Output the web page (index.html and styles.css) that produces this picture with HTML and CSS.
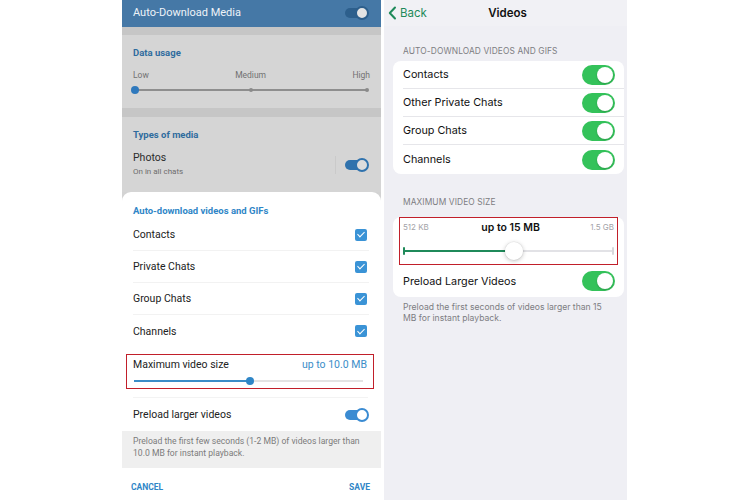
FILE: index.html
```html
<!DOCTYPE html>
<html>
<head>
<meta charset="utf-8">
<link rel="stylesheet" href="styles.css">
</head>
<body>
<div class="stage">
  <div class="android">
    <div class="a-header">
      <span>Auto-Download Media</span>
      <span class="a-toggle dim-white"><span class="knob"></span></span>
    </div>
    <div class="a-strip"></div>
    <div class="a-section usage">
      <div class="a-title">Data usage</div>
      <div class="usage-labels"><span>Low</span><span>Medium</span><span>High</span></div>
      <div class="usage-track">
        <span class="u-dot big"></span>
        <span class="u-dot mid"></span>
        <span class="u-dot end"></span>
      </div>
    </div>
    <div class="a-strip tall"></div>
    <div class="a-section types">
      <div class="a-title">Types of media</div>
      <div class="photo-row">
        <div>
          <div class="photo-name">Photos</div>
          <div class="photo-sub">On in all chats</div>
        </div>
        <span class="divider-v"></span>
        <span class="a-toggle dimmed"><span class="knob"></span></span>
      </div>
    </div>
    <div class="sheet">
      <div class="sheet-title">Auto-download videos and GIFs</div>
      <div class="chk-row"><span>Contacts</span><span class="chk"></span></div>
      <div class="chk-row"><span>Private Chats</span><span class="chk"></span></div>
      <div class="chk-row"><span>Group Chats</span><span class="chk"></span></div>
      <div class="chk-row last"><span>Channels</span><span class="chk"></span></div>
      <div class="maxbox">
        <div class="max-line"><span>Maximum video size</span><span class="max-val">up to 10.0 MB</span></div>
        <div class="max-track"><span class="max-fill"></span><span class="max-thumb"></span></div>
      </div>
      <div class="preload-row"><span>Preload larger videos</span><span class="a-toggle"><span class="knob"></span></span></div>
      <div class="a-info">Preload the first few seconds (1-2 MB) of videos larger than 10.0 MB for instant playback.</div>
      <div class="a-buttons"><span>CANCEL</span><span>SAVE</span></div>
    </div>
  </div>

  <div class="ios">
    <div class="nav">
      <span class="back">
        <svg width="9" height="14" viewBox="0 0 9 14"><path d="M7 1.5 L1.8 7 L7 12.5" fill="none" stroke="#1f8a5a" stroke-width="2" stroke-linecap="round" stroke-linejoin="round"/></svg>
        Back
      </span>
      <span class="nav-title">Videos</span>
    </div>
    <div class="i-label first">AUTO-DOWNLOAD VIDEOS AND GIFS</div>
    <div class="i-group">
      <div class="i-row"><span>Contacts</span><span class="i-toggle"></span></div>
      <div class="i-row"><span>Other Private Chats</span><span class="i-toggle"></span></div>
      <div class="i-row"><span>Group Chats</span><span class="i-toggle"></span></div>
      <div class="i-row last"><span>Channels</span><span class="i-toggle"></span></div>
    </div>
    <div class="i-label">MAXIMUM VIDEO SIZE</div>
    <div class="i-group">
      <div class="i-redbox">
        <div class="i-size-labels"><span class="sm">512 KB</span><span class="big">up to 15 MB</span><span class="sm">1.5 GB</span></div>
        <div class="i-track"><span class="i-fill"></span><span class="i-thumb"></span></div>
      </div>
      <div class="i-row last"><span>Preload Larger Videos</span><span class="i-toggle"></span></div>
    </div>
    <div class="i-foot">Preload the first seconds of videos larger than 15 MB for instant playback.</div>
  </div>
</div>
</body>
</html>
```

FILE: styles.css
```css
* { box-sizing: border-box; }
html, body { margin: 0; padding: 0; background: #ffffff; }
body { width: 750px; height: 500px; overflow: hidden; }

.stage {
  display: flex;
  gap: 3px;
  padding-left: 122px;
  height: 500px;
}

/* ---------- Android ---------- */
.android {
  width: 259px;
  height: 500px;
  background: #d3d3d3;
  font-family: Roboto, "Noto Sans", sans-serif;
  display: flex;
  flex-direction: column;
  overflow: hidden;
}
.a-header {
  height: 27px;
  background: #4578a6;
  color: #eef3f8;
  font-size: 11px;
  display: flex;
  align-items: center;
  justify-content: space-between;
  padding: 0 13px 2px 11px;
}
.a-strip { height: 8px; background: #c6c6c6; }
.a-strip.tall { height: 9px; }
.a-section { background: #d5d5d5; padding: 0 11px; }
.usage { height: 73px; padding-top: 12px; }
.a-title {
  color: #2f6c9e;
  font-weight: 700;
  font-size: 9.5px;
  line-height: 12px;
}
.usage-labels {
  display: flex;
  justify-content: space-between;
  color: #727272;
  font-size: 8.5px;
  margin-top: 11px;
  line-height: 10px;
}
.usage-track {
  position: relative;
  height: 2px;
  margin: 9px 3px 0 2px;
  background: #8e8e8e;
}
.u-dot {
  position: absolute;
  top: 50%;
  width: 4px; height: 4px;
  margin: -2px 0 0 -2px;
  border-radius: 50%;
  background: #8a8a8a;
}
.u-dot.big { left: 0; width: 8px; height: 8px; margin: -4px 0 0 -4px; background: #2f79bd; }
.u-dot.mid { left: 50%; }
.u-dot.end { left: 100%; }

.types { height: 75px; padding-top: 12px; }
.photo-row {
  display: flex;
  align-items: center;
  margin-top: 10px;
}
.photo-name { color: #2c2c2c; font-size: 10.5px; line-height: 13px; }
.photo-sub { color: #6d6d6d; font-size: 8px; line-height: 12px; margin-top: 2px; }
.divider-v { margin-left: auto; width: 1px; height: 18px; background: #cacaca; margin-right: 9px; }

.a-toggle {
  position: relative;
  width: 23px;
  height: 10px;
  border-radius: 5px;
  background: #3a8bd2;
  display: inline-block;
}
.a-toggle .knob {
  position: absolute;
  right: -1px; top: -2px;
  width: 14px; height: 14px;
  border-radius: 50%;
  background: #fff;
  border: 2px solid #3a8bd2;
}
.a-toggle.dimmed { background: #2f72ad; margin-right: 2px; }
.a-toggle.dimmed .knob { background: #dcdcdc; border-color: #2f72ad; }
.a-toggle.dim-white { background: #2d5f8c; }
.a-toggle.dim-white .knob { background: #e4e4e4; border-color: #2d5f8c; }

.sheet {
  background: #ffffff;
  border-radius: 9px 9px 0 0;
  flex: 1;
  display: flex;
  flex-direction: column;
}
.sheet-title {
  color: #2f86c7;
  font-weight: 700;
  font-size: 9.5px;
  line-height: 14px;
  padding: 12px 11px 1px;
}
.chk-row {
  height: 32px;
  margin: 0 12px 0 11px;
  display: flex;
  align-items: center;
  justify-content: space-between;
  font-size: 10.5px;
  color: #222;
  border-bottom: 1px solid #f2f2f2;
}
.chk-row.last { border-bottom: none; }
.chk {
  width: 12px; height: 12px;
  border-radius: 2px;
  background: #3a93d6;
  position: relative;
  margin-right: 2px;
}
.chk::after {
  content: "";
  position: absolute;
  left: 3.5px; top: 1.5px;
  width: 3px; height: 6px;
  border: solid #fff;
  border-width: 0 1.6px 1.6px 0;
  transform: rotate(45deg);
}
.maxbox {
  margin: 7px 7px 0 4px;
  height: 35px;
  border: 1.5px solid #c11f2a;
  padding: 3px 6px 0 6px;
}
.max-line {
  display: flex;
  justify-content: space-between;
  font-size: 10.5px;
  line-height: 13px;
  color: #222;
}
.max-val { color: #3a8dc8; }
.max-track {
  position: relative;
  height: 2px;
  margin: 9px 4px 0 1px;
  background: #e3e3e3;
}
.max-fill { position: absolute; left: 0; top: 0; height: 2px; width: 50.5%; background: #3a8dc8; }
.max-thumb {
  position: absolute;
  left: 50.5%; top: 50%;
  width: 8px; height: 8px;
  margin: -4px 0 0 -4px;
  border-radius: 50%;
  background: #2f86c7;
}
.preload-row {
  margin: 8px 13px 0 11px;
  border-top: 1px solid #f3f3f3;
  height: 34px;
  display: flex;
  align-items: center;
  justify-content: space-between;
  font-size: 10.5px;
  color: #222;
}
.a-info {
  background: #efefef;
  color: #7b7b7b;
  font-size: 8.6px;
  line-height: 12px;
  height: 37px;
  padding: 4px 14px 0 11px;
}
.a-buttons {
  flex: 1;
  display: flex;
  justify-content: space-between;
  align-items: center;
  padding: 5px 11px 0 9px;
  color: #2f86c7;
  font-weight: 700;
  font-size: 8.5px;
}

/* ---------- iOS ---------- */
.ios {
  width: 243px;
  height: 500px;
  background: #efeff4;
  font-family: Inter, "Liberation Sans", sans-serif;
  color: #111;
}
.nav {
  height: 26px;
  position: relative;
  display: flex;
  align-items: center;
  padding-left: 4px;
  background: #f1f1f5;
}
.back {
  display: flex;
  align-items: center;
  gap: 3px;
  color: #1f8a5a;
  font-size: 11.5px;
}
.nav-title {
  position: absolute;
  left: 0; right: 0;
  text-align: center;
  font-weight: 600;
  font-size: 11.5px;
  pointer-events: none;
  padding-left: 4px;
}
.i-label {
  color: #7d7d82;
  font-size: 8.4px;
  letter-spacing: 0.1px;
  line-height: 10px;
  padding: 23px 0 5px 19px;
}
.i-label.first { padding-top: 20px; }
.i-group {
  background: #ffffff;
  border-radius: 8px;
  margin: 0 3px 0 9px;
}
.i-row {
  height: 28px;
  margin-left: 10px;
  padding-right: 9px;
  display: flex;
  align-items: center;
  justify-content: space-between;
  font-size: 10.8px;
  color: #111;
  border-bottom: 1px solid #e6e6ea;
}
.i-row.last { border-bottom: none; height: 29px; }
.i-redbox + .i-row.last { height: 32px; }
.i-toggle {
  position: relative;
  width: 33px;
  height: 20px;
  border-radius: 10px;
  background: #34c25a;
}
.i-toggle::after {
  content: "";
  position: absolute;
  right: 2px; top: 2px;
  width: 16px; height: 16px;
  border-radius: 50%;
  background: #fff;
  box-shadow: 0 1px 2px rgba(0,0,0,0.2);
}
.i-redbox {
  margin: 5px 6px 0 6px;
  height: 48px;
  border: 1.5px solid #c11f2a;
  padding: 3px 3px 0 3px;
}
.i-size-labels {
  display: flex;
  justify-content: space-between;
  align-items: center;
  line-height: 13px;
}
.i-size-labels .sm { color: #a3a3a8; font-size: 8px; }
.i-size-labels .big { font-weight: 600; font-size: 10.5px; color: #111; padding-left: 2px; }
.i-track {
  position: relative;
  height: 2px;
  margin: 16px 0 0 0;
  background: #e2e2e6;
}
.i-track::before, .i-track::after {
  content: "";
  position: absolute;
  top: -3px;
  width: 2px; height: 8px;
  border-radius: 1px;
}
.i-track::before { left: 0; background: #1f8a5a; }
.i-track::after { right: 0; background: #d8d8dc; }
.i-fill { position: absolute; left: 0; top: 0; height: 2px; width: 52.5%; background: #1f8a5a; }
.i-thumb {
  position: absolute;
  left: 52.5%; top: 50%;
  width: 18px; height: 18px;
  margin: -9px 0 0 -9px;
  border-radius: 50%;
  background: #fff;
  box-shadow: 0 1px 4px rgba(0,0,0,0.25), 0 0 0 0.5px rgba(0,0,0,0.06);
}
.i-foot {
  color: #7d7d82;
  font-size: 8.6px;
  line-height: 11px;
  padding: 5px 18px 0 19px;
}
```
